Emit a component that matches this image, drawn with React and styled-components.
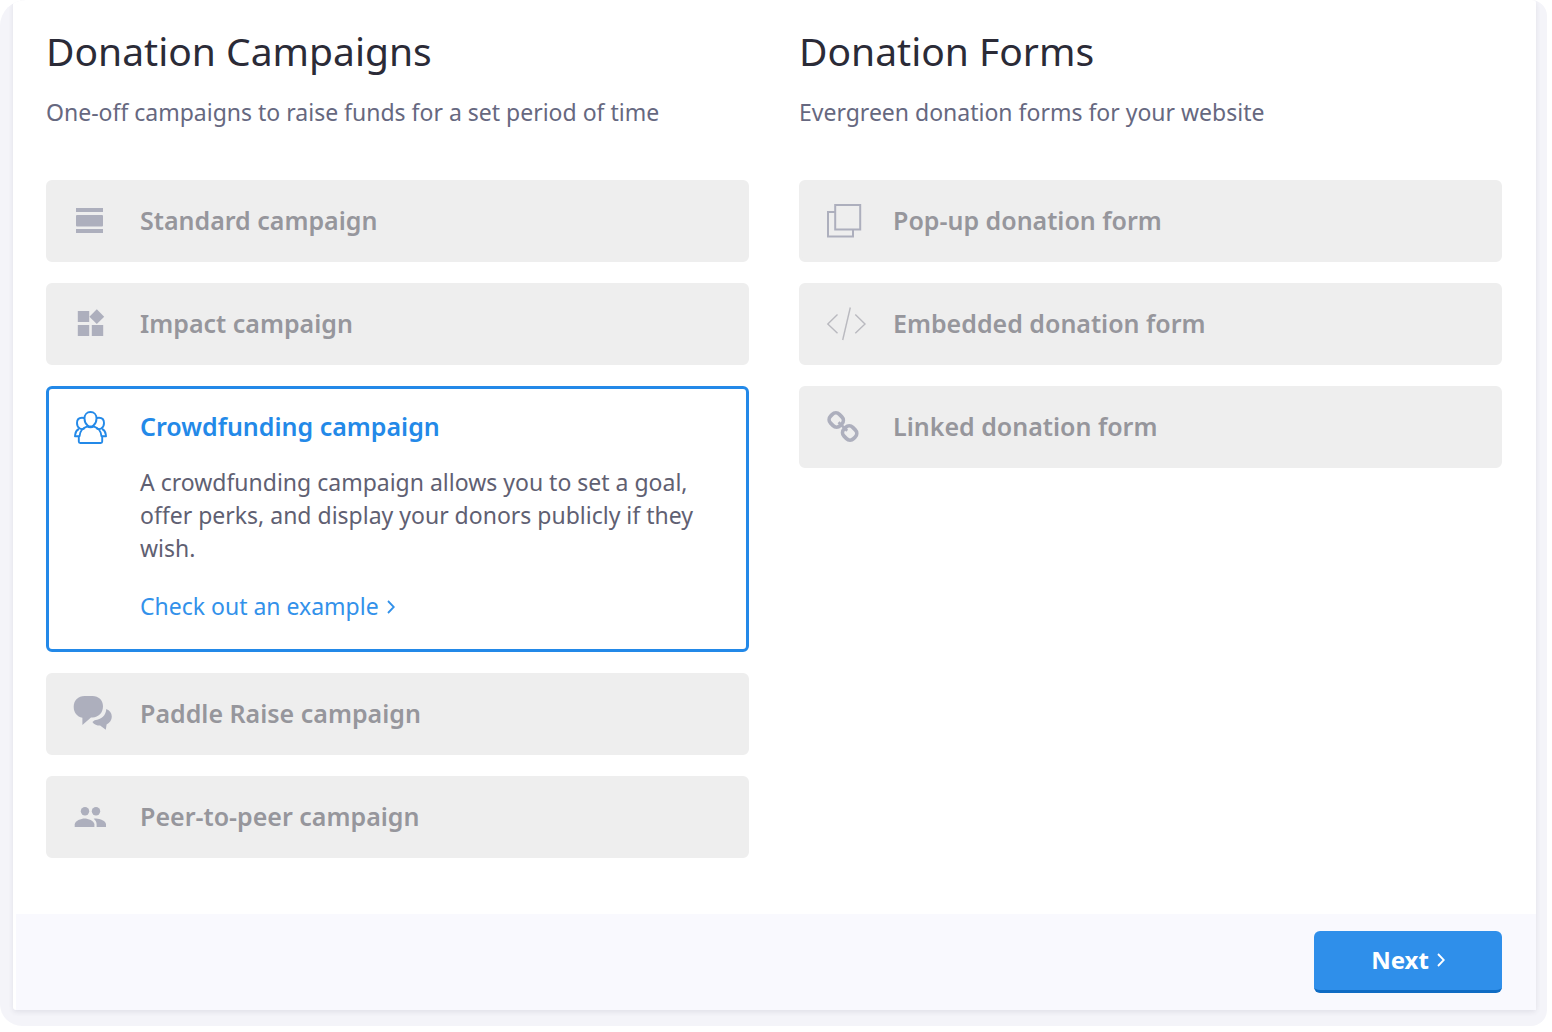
import React, { useState } from "react";
import styled, { createGlobalStyle } from "styled-components";

const GlobalStyle = createGlobalStyle`
  * {
    box-sizing: border-box;
  }

  body {
    margin: 0;
    background-color: #fff;
    font-family: "Noto Sans", "Open Sans", sans-serif;
  }
`;

const Page = styled.div`
  padding: 0 5px 6px 0;
`;

const Frame = styled.div`
  background-color: #f4f4f9;
  border-radius: 26px 16px 16px 22px;
  padding: 0 11px 16px 13px;
  overflow: hidden;
`;

const Panel = styled.main`
  background-color: #fff;
  border-radius: 3px;
  box-shadow: 0 2px 5px rgba(60, 60, 90, 0.1);
`;

const Columns = styled.div`
  display: grid;
  grid-template-columns: 1fr 1fr;
  gap: 50px;
  padding: 28px 34px 56px 33px;
`;

const Title = styled.h2`
  margin: 0;
  color: #2b2b37;
  font-size: 39px;
  font-weight: 400;
  line-height: 46px;
`;

const Subtitle = styled.p`
  margin: 22px 0 52px;
  color: #666880;
  font-size: 23px;
  line-height: 32px;
`;

const OptionList = styled.div`
  display: flex;
  flex-direction: column;
  gap: 21px;
`;

const Option = styled.div`
  border: 3px solid ${(props) => (props.$active ? "#2389e8" : "#eee")};
  border-radius: 6px;
  background-color: ${(props) => (props.$active ? "#fff" : "#eee")};
`;

const OptionButton = styled.button`
  display: flex;
  align-items: center;
  gap: 26px;
  width: 100%;
  height: 76px;
  padding: 0 25px;
  border: none;
  background: none;
  color: ${(props) => (props.$active ? "#2389e8" : "#96969c")};
  font-family: inherit;
  font-size: 25px;
  font-weight: 600;
  text-align: left;
  cursor: pointer;
`;

const OptionLabel = styled.span`
  padding-bottom: 3px;
`;

const Icon = styled.svg`
  flex: none;
  width: 40px;
  height: 40px;
  overflow: visible;
  color: ${(props) => (props.$active ? "#2389e8" : "#adafbd")};
`;

const Details = styled.div`
  padding: 1px 40px 26px 91px;
  font-size: 23px;
  line-height: 33px;
`;

const Description = styled.p`
  margin: 0 0 25px;
  color: #5f6072;
`;

const ExampleLink = styled.a`
  display: inline-flex;
  align-items: center;
  gap: 8px;
  color: #3291ea;
  text-decoration: none;
`;

const Footer = styled.footer`
  display: flex;
  justify-content: flex-end;
  margin-left: 3px;
  padding: 17px 34px 17px 0;
  background-color: #f9f9fe;
`;

const NextButton = styled.button`
  display: flex;
  align-items: center;
  justify-content: center;
  gap: 8px;
  width: 188px;
  height: 62px;
  padding: 0 0 2px;
  border: none;
  border-bottom: 3px solid #0f6cc4;
  border-radius: 6px;
  background-color: #2f8fea;
  color: #fff;
  font-family: inherit;
  font-size: 24px;
  font-weight: 700;
  cursor: pointer;
`;

const Chevron = () => (
  <svg width="8" height="14" viewBox="0 0 8 14" fill="none" stroke="currentColor" strokeWidth="1.8" aria-hidden="true">
    <path d="M1 1l5.800 6L1 13" />
  </svg>
);

const icons = {
  standard: (
    <g fill="currentColor">
      <rect x="2" y="7" width="27" height="4" />
      <rect x="2" y="14" width="27" height="11.5" rx="1" />
      <rect x="2" y="28" width="27" height="4" />
    </g>
  ),
  impact: (
    <g fill="currentColor">
      <rect x="3.8" y="7" width="11.4" height="11" />
      <rect x="3.8" y="21" width="11.4" height="11" />
      <rect x="17.8" y="21" width="11.4" height="11" />
      <path d="M22.800 5.300l7.400 7.400-7.400 7.400-7.400-7.400z" />
    </g>
  ),
  crowd: (
    <g fill="none" stroke="currentColor" strokeWidth="1.9" strokeLinejoin="round">
      <path d="M16.500 5c3.600 0 6 2.600 6 6.400 0 3-1.300 5.600-3.100 7-1.700 1.400-4.100 1.400-5.800 0-1.800-1.400-3.100-4-3.100-7C10.500 7.600 12.900 5 16.500 5z" />
      <path d="M13.300 19.300c-4.600 1.500-7.500 4.600-7.700 9.700L4.800 29.800V34.500c0 1 .4 1.500 1.400 1.500h20.600c1 0 1.400-.5 1.400-1.500v-4.700l-.8-.8c-.2-5.100-3.100-8.200-7.700-9.700" />
      <path d="M10.500 11.200C9.700 10.800 8.900 10.700 8 10.700c-3 0-5 2.100-5 5.200 0 2.300 1 4.300 2.500 5.400 1.500 1 3.600 1 5.200-.1" />
      <path d="M22.500 11.200c.8-.4 1.600-.5 2.500-.5 3 0 5 2.100 5 5.200 0 2.300-1 4.300-2.500 5.400-1.500 1-3.600 1-5.200-.1" />
      <path d="M5 21.800C2.500 23 1.500 24.900 1.200 27.600L1 29.300h4.200" />
      <path d="M28 21.800c2.500 1.200 3.500 3.100 3.800 5.800l.2 1.700h-4.200" />
      <path d="M12.800 19.200c2.200 1.400 5.200 1.400 7.400 0" />
    </g>
  ),
  paddle: (
    <g fill="currentColor">
      <path d="M10.500 2h8c6 0 10.500 4.200 10.500 10.300 0 6.500-4.500 11.200-10.500 11.200h-1.500L8.400 31v-7.300C3 22.800-.3 18.700-.3 12.800-.3 6.300 4.300 2 10.500 2z" />
      <path d="M32.300 15c3.400 1.200 5.500 4 5.500 7.700 0 3.200-2 6.200-5.200 7.700l-.8 5.300-5.700-4.200c-2.700.1-5.900-.9-7.700-3.600l2.300-1.700c6.800-.6 11.300-4.900 11.600-11.200z" />
    </g>
  ),
  peer: (
    <g fill="currentColor">
      <circle cx="11" cy="14.300" r="4.200" />
      <circle cx="22" cy="14.300" r="4.200" />
      <path d="M.7 30v-2.500c0-4 6.600-6.100 9.900-6.100s9.800 2.100 9.800 6.100V30z" />
      <path d="M22.600 30h9.400v-2.500c0-3.900-6-6-10-6.100-.8 0-1.600.1-2.300.3 1.900 1.400 2.900 3.400 2.900 5.800z" />
    </g>
  ),
  popup: (
    <g fill="none" stroke="currentColor" strokeWidth="2">
      <rect x="8.200" y="4" width="25" height="24.500" />
      <path d="M8.200 11H1v24.500h25v-7" />
    </g>
  ),
  embed: (
    <g fill="none" stroke="#b9b9bf" strokeWidth="1.400">
      <path d="M10.500 10.500L.8 20l9.700 9.300" />
      <path d="M23.300 3.500L15.700 36" />
      <path d="M28.300 10.500L38 20l-9.700 9.300" />
    </g>
  ),
  link: (
    <g fill="none" stroke="currentColor" strokeWidth="3.700">
      <rect x="2.500" y="6.800" width="13.500" height="12.400" rx="5" transform="rotate(45 9.200 13)" />
      <rect x="15.900" y="19.800" width="13.500" height="12.400" rx="5" transform="rotate(45 22.600 26)" />
      <path d="M11.500 15.300l8.700 8.500" strokeWidth="2.600" />
    </g>
  ),
};

const campaigns = [
  { id: "standard", label: "Standard campaign" },
  { id: "impact", label: "Impact campaign" },
  {
    id: "crowd",
    label: "Crowdfunding campaign",
    description:
      "A crowdfunding campaign allows you to set a goal, offer perks, and display your donors publicly if they wish.",
  },
  { id: "paddle", label: "Paddle Raise campaign" },
  { id: "peer", label: "Peer-to-peer campaign" },
];

const forms = [
  { id: "popup", label: "Pop-up donation form" },
  { id: "embed", label: "Embedded donation form" },
  { id: "link", label: "Linked donation form" },
];

function Column({ title, subtitle, options, selected, onSelect }) {
  return (
    <section>
      <Title>{title}</Title>
      <Subtitle>{subtitle}</Subtitle>
      <OptionList>
        {options.map(({ id, label, description }) => {
          const active = id === selected;
          return (
            <Option key={id} $active={active}>
              <OptionButton type="button" $active={active} aria-pressed={active} onClick={() => onSelect(id)}>
                <Icon $active={active} viewBox="0 0 40 40" aria-hidden="true">
                  {icons[id]}
                </Icon>
                <OptionLabel>{label}</OptionLabel>
              </OptionButton>
              {active && description && (
                <Details>
                  <Description>{description}</Description>
                  <ExampleLink href="#example">
                    Check out an example
                    <Chevron />
                  </ExampleLink>
                </Details>
              )}
            </Option>
          );
        })}
      </OptionList>
    </section>
  );
}

function App() {
  const [selected, setSelected] = useState("crowd");

  return (
    <Page>
      <GlobalStyle />
      <Frame>
        <Panel>
          <Columns>
            <Column
              title="Donation Campaigns"
              subtitle="One-off campaigns to raise funds for a set period of time"
              options={campaigns}
              selected={selected}
              onSelect={setSelected}
            />
            <Column
              title="Donation Forms"
              subtitle="Evergreen donation forms for your website"
              options={forms}
              selected={selected}
              onSelect={setSelected}
            />
          </Columns>
          <Footer>
            <NextButton type="button">
              Next
              <Chevron />
            </NextButton>
          </Footer>
        </Panel>
      </Frame>
    </Page>
  );
}

export default App;
